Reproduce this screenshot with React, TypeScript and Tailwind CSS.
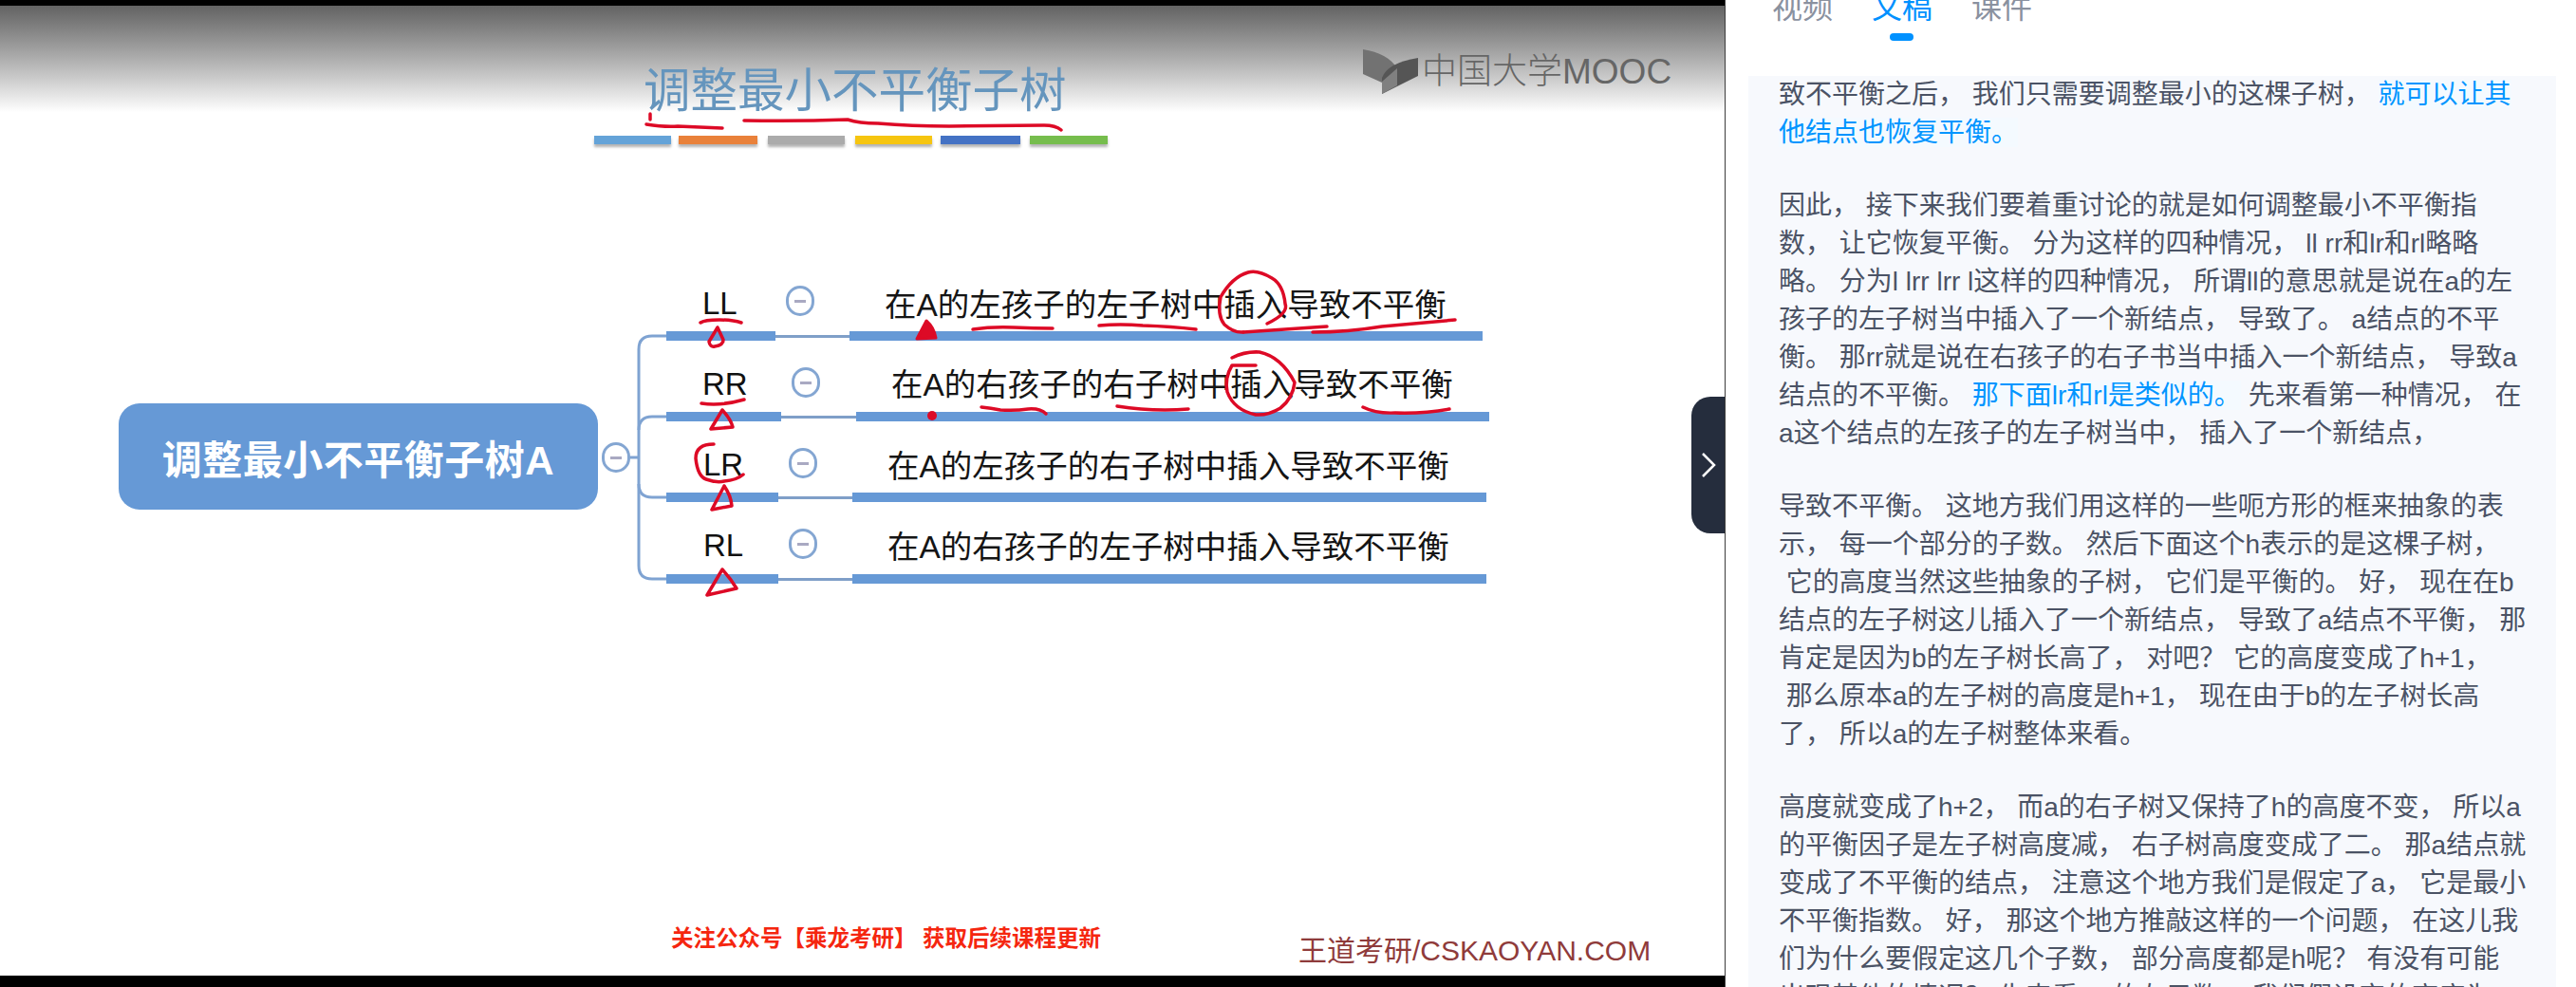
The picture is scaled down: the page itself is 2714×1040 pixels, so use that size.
const CJK = "font-['Liberation_Sans','Noto_Sans_CJK_SC',sans-serif]";

type Seg = { t: string; blue?: boolean };
const paragraphs: (string | Seg[])[][] = [
  [
    [{ t: '致不平衡之后， 我们只需要调整最小的这棵子树， ' }, { t: '就可以让其', blue: true }],
    [{ t: '他结点也恢复平衡。', blue: true }],
  ],
  [
    '因此， 接下来我们要着重讨论的就是如何调整最小不平衡指',
    '数， 让它恢复平衡。 分为这样的四种情况， ll rr和lr和rl略略',
    '略。 分为l lrr lrr l这样的四种情况， 所谓ll的意思就是说在a的左',
    '孩子的左子树当中插入了一个新结点， 导致了。 a结点的不平',
    '衡。 那rr就是说在右孩子的右子书当中插入一个新结点， 导致a',
    [{ t: '结点的不平衡。 ' }, { t: '那下面lr和rl是类似的。', blue: true }, { t: ' 先来看第一种情况， 在' }],
    'a这个结点的左孩子的左子树当中， 插入了一个新结点，',
  ],
  [
    '导致不平衡。 这地方我们用这样的一些呃方形的框来抽象的表',
    '示， 每一个部分的子数。 然后下面这个h表示的是这棵子树，',
    ' 它的高度当然这些抽象的子树， 它们是平衡的。 好， 现在在b',
    '结点的左子树这儿插入了一个新结点， 导致了a结点不平衡， 那',
    '肯定是因为b的左子树长高了， 对吧？ 它的高度变成了h+1，',
    ' 那么原本a的左子树的高度是h+1， 现在由于b的左子树长高',
    '了， 所以a的左子树整体来看。',
  ],
  [
    '高度就变成了h+2， 而a的右子树又保持了h的高度不变， 所以a',
    '的平衡因子是左子树高度减， 右子树高度变成了二。 那a结点就',
    '变成了不平衡的结点， 注意这个地方我们是假定了a， 它是最小',
    '不平衡指数。 好， 那这个地方推敲这样的一个问题， 在这儿我',
    '们为什么要假定这几个子数， 部分高度都是h呢？ 有没有可能',
    '出现其他的情况？ 先来看， 的左子数， 我们假设定的高度为',
  ],
];

const swatches = [
  { c: 'w-[81px] bg-[#64a3d8]', g: 'ml-0' },
  { c: 'w-[83px] bg-[#e9813a]', g: 'ml-[8px]' },
  { c: 'w-[81px] bg-[#ababab]', g: 'ml-[11px]' },
  { c: 'w-[81px] bg-[#f6c510]', g: 'ml-[11px]' },
  { c: 'w-[84px] bg-[#4472c4]', g: 'ml-[9px]' },
  { c: 'w-[82px] bg-[#76bd4d]', g: 'ml-[10px]' },
];

const rows = [
  { label: 'LL', text: '在A的左孩子的左子树中插入导致不平衡', labelPos: 'left-[740px] top-[303px]', textPos: 'left-[932px] top-[305px]', circle: 'left-[828px] top-[301px]', bar1: 'left-[702px] top-[349px] w-[115px]', bar2: 'left-[895px] top-[349px] w-[667px]', line: 'left-[817px] top-[353px] w-[78px]' },
  { label: 'RR', text: '在A的右孩子的右子树中插入导致不平衡', labelPos: 'left-[740px] top-[388px]', textPos: 'left-[939px] top-[389px]', circle: 'left-[834px] top-[387px]', bar1: 'left-[702px] top-[434px] w-[121px]', bar2: 'left-[902px] top-[434px] w-[667px]', line: 'left-[823px] top-[438px] w-[79px]' },
  { label: 'LR', text: '在A的左孩子的右子树中插入导致不平衡', labelPos: 'left-[741px] top-[473px]', textPos: 'left-[935px] top-[475px]', circle: 'left-[831px] top-[472px]', bar1: 'left-[702px] top-[519px] w-[118px]', bar2: 'left-[898px] top-[519px] w-[668px]', line: 'left-[820px] top-[523px] w-[78px]' },
  { label: 'RL', text: '在A的右孩子的左子树中插入导致不平衡', labelPos: 'left-[741px] top-[558px]', textPos: 'left-[935px] top-[560px]', circle: 'left-[831px] top-[557px]', bar1: 'left-[702px] top-[605px] w-[118px]', bar2: 'left-[898px] top-[605px] w-[668px]', line: 'left-[820px] top-[609px] w-[78px]' },
];

function Collapse({ pos }: { pos: string }) {
  return (
    <div className={`absolute ${pos} flex h-[32px] w-[30px] items-center justify-center rounded-full border-[3px] border-[#84a6d2] bg-white`}>
      <div className="h-[3px] w-[12px] bg-[#a9a9c2]" />
    </div>
  );
}

const inkPaths = [
  // title
  'M685 120 L685 126',
  'M681 131 Q700 134 714 133 L761 135',
  'M784 127 Q840 128 893 126 Q905 130 925 130 Q960 133 1000 133 L1100 132 Q1112 132 1118 137',
  // left label marks
  'M738 340 Q742 337 758 337 Q772 337 781 340',
  'M756 345 L747 360 Q748 366 753 365 Q762 364 762 358 L756 345',
  'M739 425 Q760 428 784 421',
  'M761 432 L749 452 L772 450 Q770 442 761 432',
  'M752 468 Q733 468 733 483 Q735 502 744 505 Q755 509 763 507 Q776 506 783 500',
  'M763 512 L750 537 L771 533 Q770 522 763 512',
  'M761 600 L745 627 L776 620 Q770 610 761 600',
  // row 1
  'M1025 347 Q1045 344 1068 345 Q1090 346 1109 346',
  'M1158 343 Q1180 341 1204 343 Q1235 344 1260 347',
  'M1335 341 Q1358 330 1354 320 Q1352 300 1340 293 Q1325 284 1315 287 Q1298 292 1286 313 Q1282 332 1290 342 Q1300 351 1310 350',
  'M1310 350 L1383 345 L1398 344',
  'M1383 350 Q1420 350 1456 344 L1533 337',
  // row 2
  'M1034 429 Q1044 430 1054 432 Q1070 433 1083 431 Q1096 430 1102 436',
  'M1177 428 Q1215 434 1252 431',
  'M1298 377 Q1312 370 1327 371 Q1350 376 1364 403 Q1362 420 1349 430 Q1336 438 1323 437 Q1300 432 1293 413 Q1290 398 1298 385 L1323 385',
  'M1436 429 Q1450 436 1470 435 Q1500 436 1527 431',
];

export default function App() {
  return (
    <div className={`flex h-[1040px] w-[2714px] overflow-hidden bg-white ${CJK}`}>
      <section className="relative flex h-[1040px] w-[1818px] shrink-0 flex-col border-r border-[#3c3c3c]">
        <div className="h-[6px] bg-black" />
        <div className="h-[112px] bg-linear-to-b from-[#636363] to-white" />
        <div className="flex-1 bg-white" />
        <div className="h-[12px] bg-black" />

        {/* slide header */}
        <h1 className="absolute left-[678px] top-[70px] text-[49.5px] font-normal leading-[52px] text-[#6595bd]">调整最小不平衡子树</h1>
        <div className="absolute left-[626px] top-[143px] flex">
          {swatches.map((s, i) => (
            <div key={i} className={`h-[9px] ${s.c} ${s.g} shadow-[0_3px_3px_rgba(0,0,0,0.3)]`} />
          ))}
        </div>

        {/* logo */}
        <div className="absolute left-[1436px] top-[52px] flex items-center gap-[4px]">
          <svg width="58" height="48" viewBox="0 0 58 48">
            <path d="M0 0 Q26 4 36 20 L20 34 L20 35 L0 26 Z" fill="#727272" />
            <path d="M20 47 L20 30 Q26 14 58 9 L58 28 Z" fill="#555555" />
            <path d="M20 47 L20 34 L36 20 L36 38 Z" fill="#808080" />
          </svg>
          <span className="text-[37px] font-light leading-[40px] text-[#666666]">中国大学MOOC</span>
        </div>

        {/* mind map */}
        <div className="absolute left-[125px] top-[425px] flex h-[112px] w-[505px] items-center justify-center rounded-[22px] bg-[#6699d6]">
          <span className="pt-[9px] text-[42px] font-bold leading-none tracking-[0.5px] text-white">调整最小不平衡子树A</span>
        </div>
        <Collapse pos="left-[634px] top-[466px]" />
        <svg className="absolute left-0 top-0" width="1817" height="1040" fill="none">
          <path d="M664 482 L673 482" stroke="#7fa3d2" strokeWidth="3" />
          <path d="M702 354 L687 354 Q673 354 673 368 L673 596 Q673 610 687 610 L702 610" stroke="#7fa3d2" strokeWidth="3" />
          <path d="M702 439 L687 439 Q673 439 673 453 M673 510 Q673 524 687 524 L702 524" stroke="#7fa3d2" strokeWidth="3" />
        </svg>
        {rows.map((r) => (
          <div key={r.label}>
            <span className={`absolute ${r.labelPos} text-[33px] leading-none text-[#111111]`}>{r.label}</span>
            <Collapse pos={r.circle} />
            <div className={`absolute ${r.line} h-[3px] bg-[#7f9fc8]`} />
            <div className={`absolute ${r.bar1} h-[10px] bg-[#6699d6]`} />
            <div className={`absolute ${r.bar2} h-[10px] bg-[#6699d6]`} />
            <span className={`absolute ${r.textPos} whitespace-nowrap text-[33.5px] leading-none text-[#151515]`}>{r.text}</span>
          </div>
        ))}

        {/* pen marks */}
        <svg className="absolute left-0 top-0" width="1817" height="1040" fill="none">
          {inkPaths.map((d, i) => (
            <path key={i} d={d} stroke="#dd0a26" strokeWidth="3.5" strokeLinecap="round" strokeLinejoin="round" />
          ))}
          <path d="M976 338 L966 357 L986 356 Q984 345 976 338 Z" fill="#dd0a26" stroke="#dd0a26" strokeWidth="3" strokeLinejoin="round" />
          <circle cx="982" cy="438" r="5" fill="#dd0a26" />
        </svg>

        {/* footer notes */}
        <span className="absolute left-[707px] top-[976px] whitespace-nowrap text-[23.5px] font-bold leading-[26px] text-[#f5260f]">关注公众号【乘龙考研】 获取后续课程更新</span>
        <span className="absolute left-[1368px] top-[985px] whitespace-nowrap text-[30px] leading-[34px] text-[#8f3b3b]">王道考研/CSKAOYAN.COM</span>

        {/* collapse handle */}
        <div className="absolute left-[1782px] top-[418px] flex h-[144px] w-[35px] items-center justify-center rounded-l-[20px] bg-[#252d3d]">
          <svg width="16" height="26" viewBox="0 0 16 26" fill="none">
            <path d="M2 1 L14 13 L2 25" stroke="#ffffff" strokeWidth="2.5" />
          </svg>
        </div>
      </section>

      <aside className="flex h-[1040px] min-w-0 flex-1 flex-col overflow-hidden bg-white">
        <nav className="-mt-[12px] ml-[49px] flex h-[92px] shrink-0 gap-[41px] text-[32px] leading-[40px]">
          <span className="text-[#8a919f]">视频</span>
          <div className="relative text-[#0091ff]">
            <span>文稿</span>
            <div className="absolute left-[19px] top-[47px] h-[8px] w-[25px] rounded-full bg-[#0091ff]" />
          </div>
          <span className="text-[#8a919f]">课件</span>
        </nav>
        <div className="ml-[24px] w-[851px] flex-1 bg-[#f7f9fd] pl-[32px] text-[28px] leading-[40px] text-[#4b5365]">
          {paragraphs.map((p, i) => (
            <div key={i} className="mb-[37px]">
              {p.map((line, j) => (
                <div key={j} className="whitespace-pre">
                  {typeof line === 'string'
                    ? line
                    : line.map((s, k) => (
                        <span key={k} className={s.blue ? 'bg-[#f4faff] text-[#0095ff]' : ''}>{s.t}</span>
                      ))}
                </div>
              ))}
            </div>
          ))}
        </div>
      </aside>
    </div>
  );
}
